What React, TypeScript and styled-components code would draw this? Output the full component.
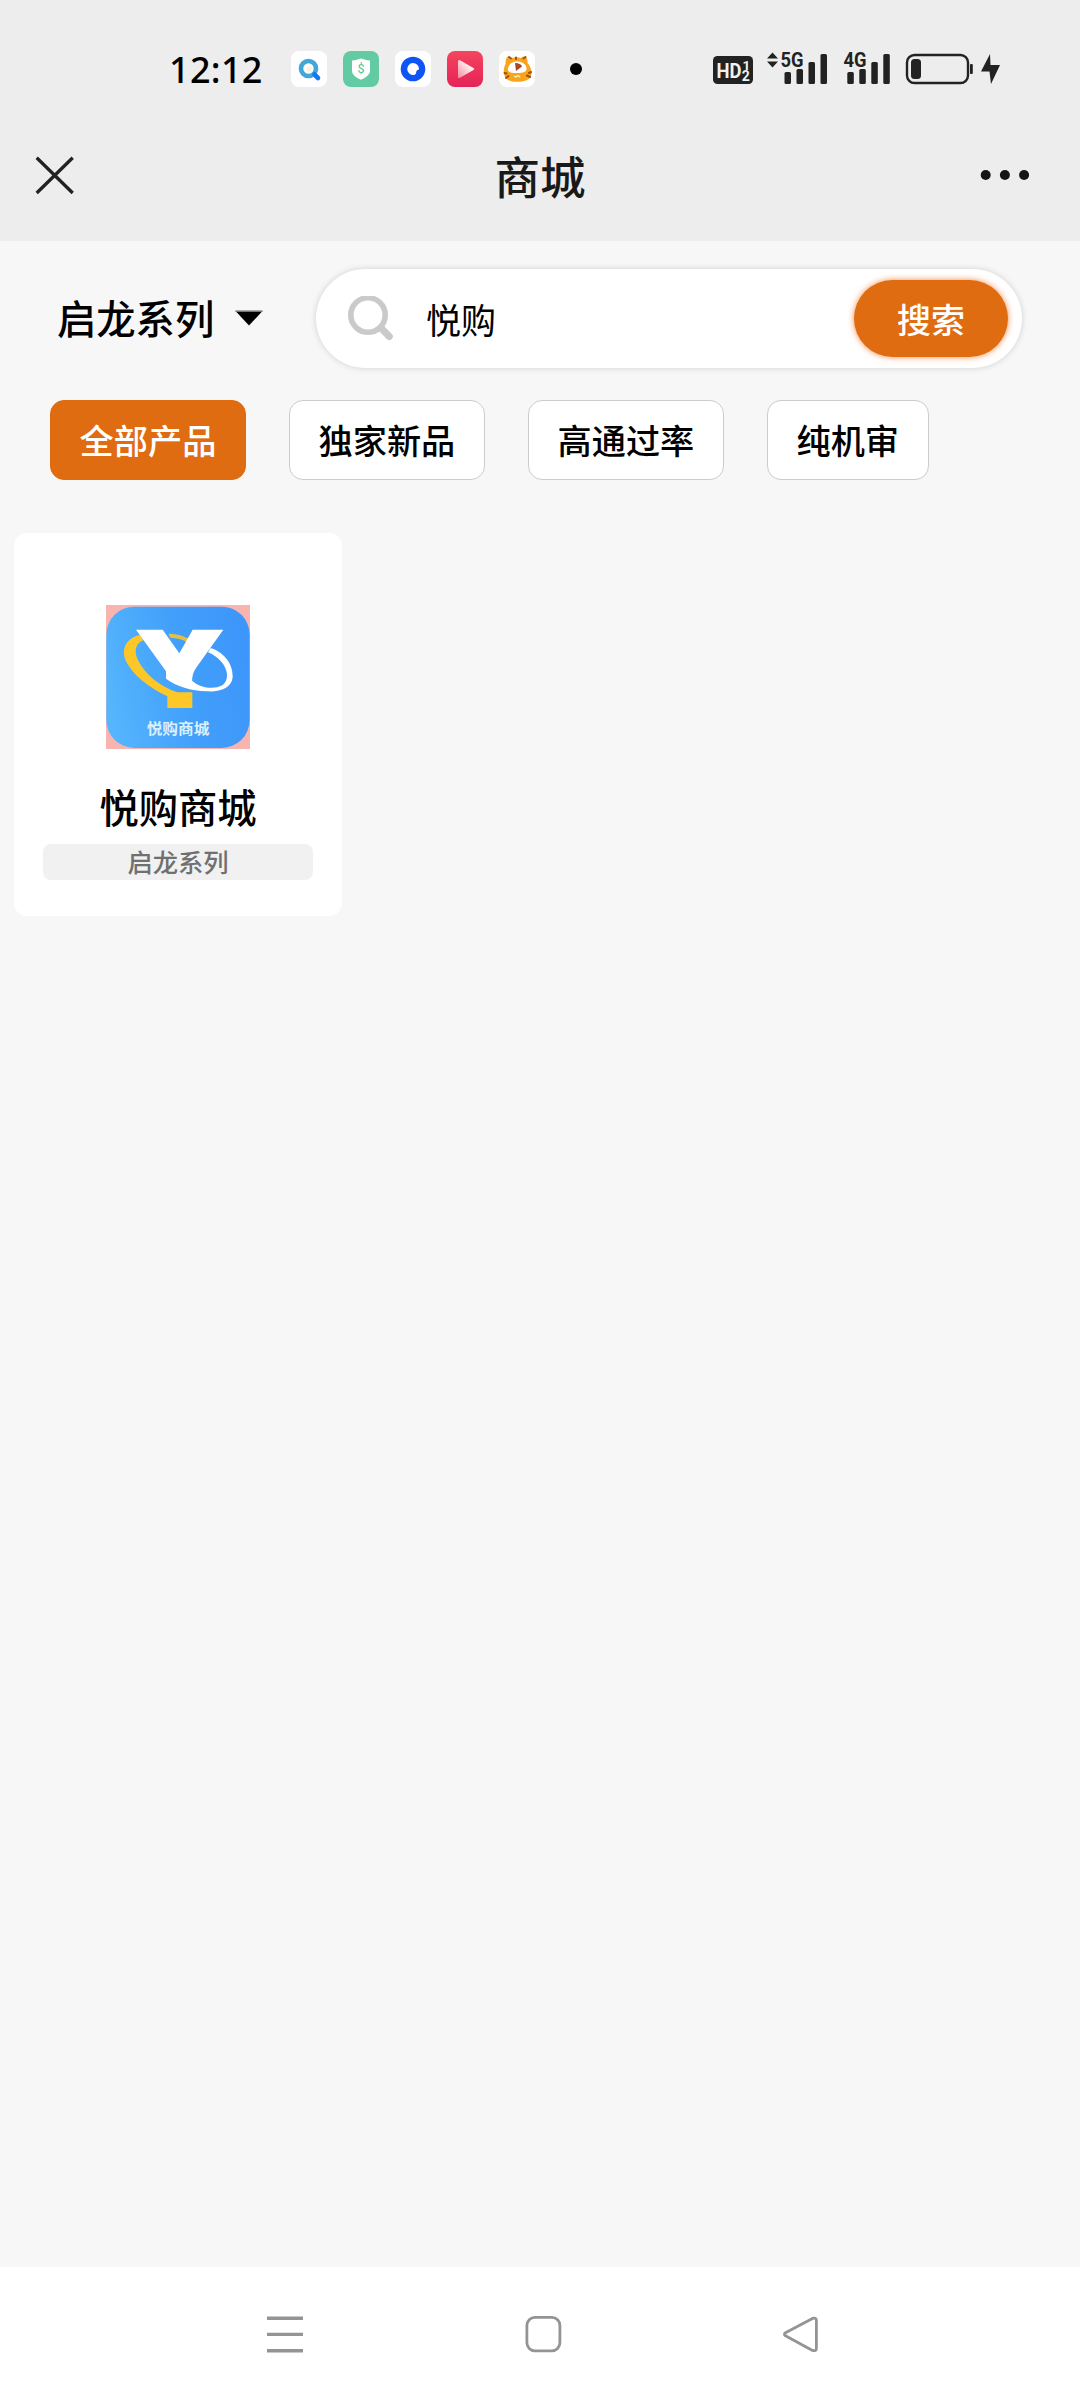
import React, { useState } from "react";
import styled, { createGlobalStyle } from "styled-components";

const cjk = `"Noto Sans CJK SC", "Noto Sans", sans-serif`;

const GlobalStyle = createGlobalStyle`
  * { box-sizing: border-box; }
  body { margin: 0; background: #f7f7f7; }
  button, input { font: inherit; margin: 0; padding: 0; border: 0; outline: 0; }
  svg { display: block; flex: none; }
`;

const Screen = styled.div`
  width: 1080px;
  height: 2400px;
  display: flex;
  flex-direction: column;
  background: #f7f7f7;
  font-family: ${cjk};
  color: #000;
  overflow: hidden;
`;

const StatusBar = styled.div`
  height: 138px;
  padding: 0 79px 0 169px;
  display: flex;
  align-items: center;
  background: #ededed;
`;

const Clock = styled.div`
  width: 122px;
  padding-top: 1px;
  font: 500 36px/40px "Noto Sans", sans-serif;
  letter-spacing: 0.3px;
  white-space: nowrap;
`;

const AppIcons = styled.div`
  display: flex;
  gap: 16px;
`;

const AppIcon = styled.div<{ $bg: string }>`
  width: 36px;
  height: 36px;
  border-radius: 8px;
  background: ${(p) => p.$bg};
  overflow: hidden;
`;

const MoreDot = styled.div`
  width: 12px;
  height: 12px;
  margin-left: 35px;
  border-radius: 50%;
  background: #000;
`;

const Signals = styled.div`
  display: flex;
  align-items: center;
  margin-left: auto;
`;

const TitleBar = styled.header`
  height: 103px;
  padding: 0 50px 29px 35px;
  display: grid;
  grid-template-columns: 45px 1fr 50px;
  align-items: center;
  background: #ededed;
`;

const Title = styled.h1`
  margin: 0;
  padding-left: 20px;
  font-size: 45.5px;
  font-weight: 500;
  line-height: 60px;
  text-align: center;
  color: #191919;
`;

const Main = styled.main`
  flex: 1;
  display: flex;
  flex-direction: column;
`;

const SearchRow = styled.div`
  height: 99px;
  margin-top: 28px;
  padding: 0 58px 0 57px;
  display: flex;
  align-items: center;
  justify-content: space-between;
`;

const Series = styled.div`
  display: flex;
  align-items: center;
  padding-bottom: 3px;
  font-size: 39.3px;
  line-height: 54px;
  font-weight: 500;
`;

const Caret = styled.svg`
  margin: 1px 0 0 21px;
`;

const SearchBox = styled.div`
  width: 706px;
  height: 99px;
  padding: 0 14px 0 31px;
  display: flex;
  align-items: center;
  border-radius: 50px;
  background: #fff;
  box-shadow: 0 0 6px rgba(0, 0, 0, 0.16);
`;

const SearchInput = styled.input`
  flex: 1;
  min-width: 0;
  margin-left: 33px;
  height: 60px;
  font-size: 35px;
  line-height: 60px;
  color: #000;
  background: transparent;
`;

const SearchButton = styled.button`
  width: 154px;
  height: 77px;
  border-radius: 39px;
  background: #e06c12;
  color: #fff;
  font-size: 34px;
  font-weight: 500;
  line-height: 50px;
  box-shadow: 0 0 6px rgba(240, 100, 10, 0.75);
`;

const Chips = styled.div`
  display: flex;
  gap: 43px;
  margin-top: 32px;
  padding-left: 50px;
`;

const Chip = styled.button<{ $active: boolean }>`
  height: 80px;
  padding: 0 28.6px 3px;
  border: 1px solid ${(p) => (p.$active ? "#e06c12" : "#ccc")};
  border-radius: 14px;
  background: ${(p) => (p.$active ? "#e06c12" : "#fff")};
  color: ${(p) => (p.$active ? "#fff" : "#000")};
  font-size: 34.2px;
  font-weight: 500;
  line-height: 50px;
`;

const Products = styled.div`
  display: grid;
  grid-template-columns: repeat(3, 328px);
  gap: 34px;
  padding: 53px 14px 0;
`;

const Card = styled.article`
  height: 383px;
  padding: 72px 29px 0;
  display: flex;
  flex-direction: column;
  align-items: center;
  border-radius: 13px;
  background: #fff;
`;

const ProductName = styled.div`
  margin-top: 28px;
  font-size: 39.3px;
  font-weight: 500;
  line-height: 58px;
`;

const ProductTag = styled.div`
  width: 270px;
  height: 36px;
  margin-top: 9px;
  border-radius: 8px;
  background: #f1f1f1;
  color: #707070;
  font-size: 25.3px;
  font-weight: 500;
  line-height: 34px;
  text-align: center;
`;

const NavBar = styled.nav`
  height: 133px;
  padding: 0 260px 0 265px;
  display: flex;
  align-items: center;
  justify-content: space-between;
  background: #fff;
`;

const Bars = () => (
  <>
    <rect x="0" y="18" width="6.5" height="12" rx="1.5" />
    <rect x="12" y="15" width="6.5" height="15" rx="1.5" />
    <rect x="24" y="8" width="6.5" height="22" rx="1.5" />
    <rect x="36" y="0" width="6.5" height="30" rx="1.5" />
  </>
);

const ProductLogo = () => (
  <svg width="144" height="144" viewBox="48 45 432 432">
    <defs>
      <linearGradient id="sky" x1="0" y1="0.6" x2="1" y2="0.4">
        <stop offset="0" stopColor="#55b5fd" />
        <stop offset="0.55" stopColor="#429ffa" />
        <stop offset="1" stopColor="#3d96fb" />
      </linearGradient>
    </defs>
    <rect x="48" y="45" width="432" height="432" fill="#f8b5b0" />
    <rect x="49" y="50" width="430" height="424" rx="84" fill="url(#sky)" />
    <path
      d="M236 131 C262 131 285 138 305 152 L298 160 C280 148 262 144 240 143 Z"
      fill="#e3bf42"
    />
    <path
      d="M150 135 C112 143 93 173 106 209 C125 252 174 291 232 319 L232 354 H307 V307 H262 C212 292 165 253 144 211 C130 181 138 160 160 151 Z"
      fill="#fcc727"
    />
    <path d="M138 119 H218 L268 190 L308 119 H400 L318 234 C309 246 306 260 306 278 L228 266 V244 Z" fill="#fff" />
    <path
      d="M362 174 C405 188 430 225 428 262 C425 294 390 307 350 304 C303 302 260 290 228 266 L250 255 L306 272 C328 292 370 301 397 286 C425 267 412 211 354 187 Z"
      fill="#fff"
    />
    <text
      x="170"
      y="431"
      textLength="188"
      lengthAdjust="spacingAndGlyphs"
      fontFamily={cjk}
      fontSize="45"
      fontWeight="700"
      fill="#d9f0ff"
    >
      悦购商城
    </text>
  </svg>
);

const chips = ["全部产品", "独家新品", "高通过率", "纯机审"];
const products = [{ name: "悦购商城", series: "启龙系列" }];

export default function App() {
  const [active, setActive] = useState(chips[0]);
  const [query, setQuery] = useState("悦购");

  return (
    <Screen>
      <GlobalStyle />
      <StatusBar>
        <Clock>12:12</Clock>
        <AppIcons>
          <AppIcon $bg="#fff">
            <svg width="36" height="36" viewBox="0 0 36 36">
              <circle cx="17.5" cy="17.5" r="7.5" fill="#fff" stroke="#40a6dc" strokeWidth="4.6" />
              <circle cx="18.6" cy="18.5" r="3.2" fill="#fff4df" />
              <path d="M23.5 23.5 L27 27" stroke="#1177f2" strokeWidth="4.6" strokeLinecap="round" />
            </svg>
          </AppIcon>
          <AppIcon $bg="#62cba4">
            <svg width="36" height="36" viewBox="0 0 36 36">
              <path d="M9 9.5 C13 9.5 15 8 18 7.5 C21 8 23 9.5 27 9.5 V20 C27 24 22 27 18 28.8 C14 27 9 24 9 20 Z" fill="#fff" />
              <text x="18" y="22" textAnchor="middle" fontFamily="Roboto, sans-serif" fontSize="12.5" fill="#55c49a">$</text>
            </svg>
          </AppIcon>
          <AppIcon $bg="#fff">
            <svg width="36" height="36" viewBox="0 0 36 36">
              <circle cx="18" cy="18" r="12.3" fill="#0f55f5" />
              <path d="M18 12 A6 6 0 0 1 24 18 C24 19 22 18.8 21.5 20 C21 21.2 21.5 23 19.7 23.8 A6 6 0 1 1 18 12 Z" fill="#fff" />
            </svg>
          </AppIcon>
          <AppIcon $bg="linear-gradient(#f4455d, #e52258)">
            <svg width="36" height="36" viewBox="0 0 36 36">
              <defs>
                <linearGradient id="play" x1="1" y1="0" x2="0" y2="1">
                  <stop offset="0.35" stopColor="#ffe9ec" />
                  <stop offset="1" stopColor="#f58b9f" />
                </linearGradient>
              </defs>
              <path d="M11 10.5 Q11 8.2 13 9.2 L26.5 17 Q28.2 18 26.5 19 L13 26.8 Q11 27.8 11 25.5 Z" fill="url(#play)" />
            </svg>
          </AppIcon>
          <AppIcon $bg="#fff">
            <svg width="36" height="36" viewBox="0 0 36 36">
              <path d="M6.5 13 C6.5 5 9.5 4 12.5 7 Q18 5.5 22 7 C26 4 29 6 28.5 12 C33 17 34 24 30 28 C24 31.8 12 31.8 7.5 28 C4 24 4 18 6.5 13 Z" fill="#f8a51d" />
              <path d="M10 6 L12 7.5 M24.5 7.5 L26.5 6 M17 6.5 V8 M5.5 22 L7.5 22.5 M7 27 L9.5 25 M32 21 L30 22 M31 26 L28 24.5" stroke="#9b501e" strokeWidth="2" strokeLinecap="round" />
              <path d="M10 15 C12 9 24 9 27 15 C29 20 26 22 18 22 C10 22 7 20 10 15 Z" fill="#fff" />
              <path d="M16 12 Q22 12 23 15.5 L17 20 Z" fill="#a6472c" />
              <path d="M15 25 L17 26 L19 24.5 L21 26" stroke="#fff2b8" strokeWidth="1.3" fill="none" />
            </svg>
          </AppIcon>
        </AppIcons>
        <MoreDot />
        <Signals>
          <svg width="288" height="40" viewBox="713 49 288 40" fill="#222">
            <rect x="713" y="56" width="40" height="28" rx="4.5" />
            <g fontFamily="Roboto, sans-serif" fontWeight="700">
              <text x="716.5" y="78" fontSize="21" textLength="25" lengthAdjust="spacingAndGlyphs" fill="#f1f1f1">HD</text>
              <text x="742.5" y="69.5" fontSize="13.5" fill="#f1f1f1">1</text>
              <text x="741.8" y="80.8" fontSize="14" fill="#f1f1f1">2</text>
              <text x="780.5" y="67" fontSize="20" textLength="23" lengthAdjust="spacingAndGlyphs">5G</text>
              <text x="843.5" y="67" fontSize="20" textLength="23" lengthAdjust="spacingAndGlyphs">4G</text>
            </g>
            <path d="M767 58.5 L772.5 52.5 L778 58.5 Z M767 61.5 H778 L772.5 67.5 Z" />
            <g transform="translate(784.5 54)"><Bars /></g>
            <g transform="translate(847.3 54)"><Bars /></g>
            <rect x="907" y="55" width="61" height="28" rx="7.5" fill="none" stroke="#222" strokeWidth="2.4" />
            <rect x="911" y="59" width="10" height="20" rx="3.5" />
            <rect x="970" y="64" width="2.8" height="10" rx="1" />
            <path d="M990 54 L981 71.5 H989.5 L991 84 L1000 65 H990.5 Z" />
          </svg>
        </Signals>
      </StatusBar>

      <TitleBar>
        <svg width="40" height="40" viewBox="0 0 40 40" stroke="#222" strokeWidth="3.3">
          <path d="M1.7 2.7 L37.7 38 M37.7 2.7 L1.7 38" />
        </svg>
        <Title>商城</Title>
        <svg width="50" height="12" viewBox="0 0 50 12" fill="#151515">
          <circle cx="5.7" cy="6" r="5" />
          <circle cx="24.9" cy="6" r="5" />
          <circle cx="44.1" cy="6" r="5" />
        </svg>
      </TitleBar>

      <Main>
        <SearchRow>
          <Series>
            启龙系列
            <Caret width="28" height="16" viewBox="0 0 28 16">
              <path d="M0.5 1 H27.5 L14 15.5 Z" fill="#000" />
              <path d="M0.5 1.2 H27.5" stroke="#777" strokeWidth="1.6" />
            </Caret>
          </Series>
          <SearchBox>
            <svg width="46" height="46" viewBox="0 0 46 46" fill="none" stroke="#cacaca">
              <circle cx="21" cy="19" r="17.2" strokeWidth="5.6" />
              <path d="M34 32 L42.3 40.5" strokeWidth="7" strokeLinecap="round" />
            </svg>
            <SearchInput value={query} onChange={(e) => setQuery(e.target.value)} />
            <SearchButton>搜索</SearchButton>
          </SearchBox>
        </SearchRow>
        <Chips>
          {chips.map((label) => (
            <Chip key={label} $active={label === active} onClick={() => setActive(label)}>
              {label}
            </Chip>
          ))}
        </Chips>
        <Products>
          {products.map((p) => (
            <Card key={p.name}>
              <ProductLogo />
              <ProductName>{p.name}</ProductName>
              <ProductTag>{p.series}</ProductTag>
            </Card>
          ))}
        </Products>
      </Main>

      <NavBar>
        <svg width="40" height="40" viewBox="0 0 40 40" stroke="#949494" strokeWidth="3.4">
          <path d="M2 4.2 H38 M2 20.4 H38 M2 36.8 H38" />
        </svg>
        <svg width="40" height="40" viewBox="0 0 40 40" fill="none" stroke="#949494" strokeWidth="2.8">
          <rect x="3.9" y="3.4" width="33" height="33.4" rx="8" />
        </svg>
        <svg width="40" height="40" viewBox="0 0 40 40" fill="none" stroke="#949494" strokeWidth="2.8" strokeLinejoin="round">
          <path d="M32.5 4.4 L5.5 18.8 Q3.3 20.2 5.5 21.8 L32.5 36.4 Q36.2 37.6 36.4 34.4 V6.4 Q36.2 3.2 32.5 4.4 Z" />
        </svg>
      </NavBar>
    </Screen>
  );
}
